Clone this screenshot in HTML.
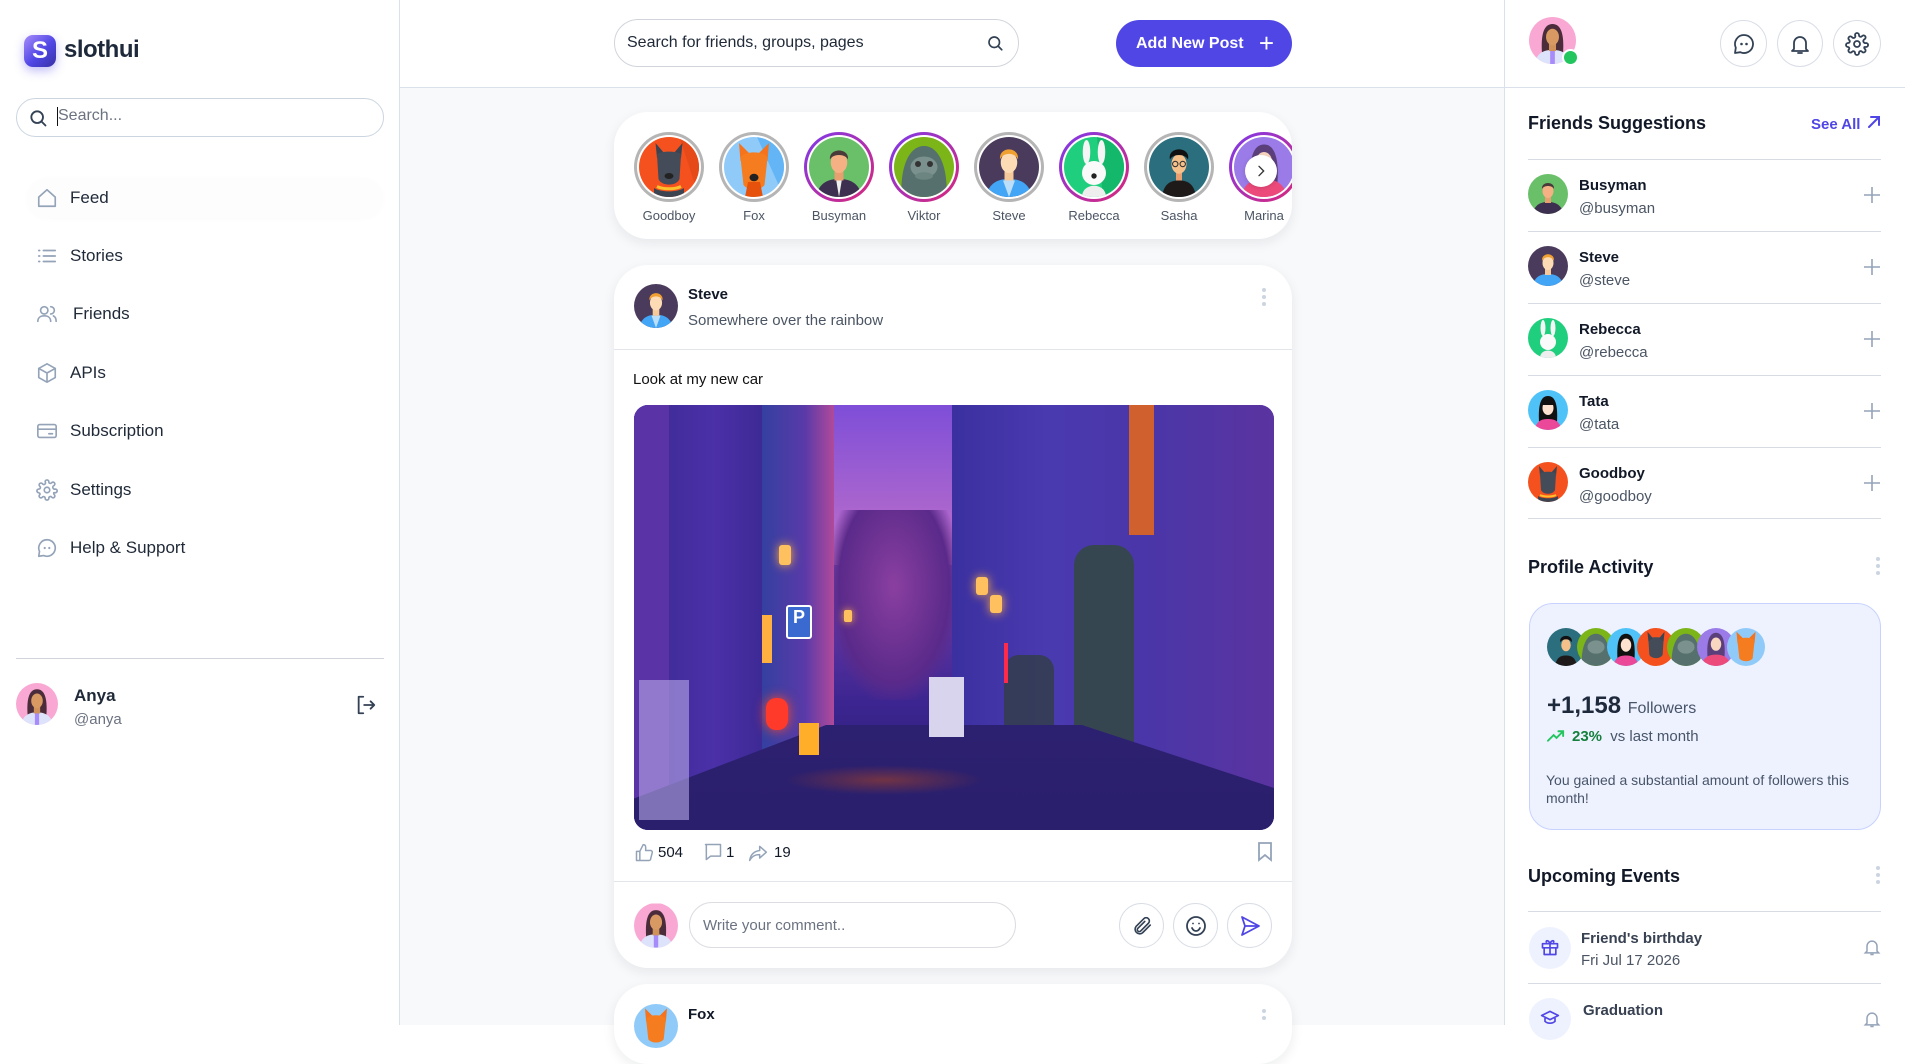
<!DOCTYPE html>
<html><head><meta charset="utf-8"><style>
*{box-sizing:border-box;margin:0;padding:0}
body{width:1905px;height:1025px;overflow:hidden;background:#fff;font-family:"Liberation Sans",sans-serif;color:#111827;position:relative}
.abs{position:absolute}
.av{position:absolute;border-radius:50%;overflow:hidden}
.av svg{display:block;width:100%;height:100%}
.nav{position:absolute;left:36px;display:flex;align-items:center;font-size:17px;color:#1f2937}
.nav svg{width:22px;height:22px;margin-right:12px;fill:none;stroke:#94a3b8;stroke-width:1.8;stroke-linecap:round;stroke-linejoin:round}
.card{position:absolute;background:#fff;border-radius:34px;box-shadow:0 4px 12px rgba(15,23,42,.08)}
.story{position:absolute;top:132px;width:70px;text-align:center}
.story .ring{width:70px;height:70px;border-radius:50%;padding:3px;background:#b5b5b5}
.story .ring.g{background:linear-gradient(135deg,#7c3aed,#db2777)}
.story .ring .in{width:100%;height:100%;border-radius:50%;background:#fff;padding:2px}
.story .ring .in div{width:100%;height:100%;border-radius:50%;overflow:hidden}
.story span{display:block;font-size:13px;color:#4b5563;margin-top:6px}
.ic{position:absolute;border:1px solid #d9dde5;border-radius:50%;display:flex;align-items:center;justify-content:center;background:#fff}
.ic svg{fill:none;stroke:#334155;stroke-width:1.8;stroke-linecap:round;stroke-linejoin:round}
.fr{position:absolute;left:1528px;width:353px;height:72px;border-top:1px solid #d6dbe4}
.fr b{position:absolute;left:51px;top:17px;font-size:15px}
.fr i{position:absolute;left:51px;top:40px;font-size:15px;font-style:normal;color:#4b5563}
.fr .p{position:absolute;right:0;top:26px;width:18px;height:18px}
</style></head><body>

<!-- LEFT SIDEBAR -->
<div class="abs" style="left:399px;top:0;width:1px;height:1025px;background:#dbe1ea"></div>
<div class="abs" style="left:24px;top:35px;width:32px;height:32px;border-radius:9px;background:linear-gradient(135deg,#a78bfa,#4f46e5 55%,#3730a3);box-shadow:0 4px 10px rgba(79,70,229,.35);color:#fff;font-weight:bold;font-size:24px;text-align:center;line-height:32px">S</div>
<div class="abs" style="left:64px;top:36px;font-size:24px;font-weight:bold;color:#1e293b;letter-spacing:-0.5px">slothui</div>
<div class="abs" style="left:16px;top:98px;width:368px;height:39px;border:1px solid #cbd5e1;border-radius:20px"></div>
<svg class="abs" style="left:28px;top:108px" width="20" height="20" viewBox="0 0 24 24" fill="none" stroke="#334155" stroke-width="2.2" stroke-linecap="round"><circle cx="11" cy="11" r="7"/><path d="M16.5 16.5L21 21"/></svg>
<div class="abs" style="left:57px;top:107px;width:1px;height:19px;background:#111"></div>
<div class="abs" style="left:58px;top:107px;font-size:16px;color:#6b7280">Search...</div>

<div class="abs" style="left:27px;top:178px;width:356px;height:40px;border-radius:20px;background:#fdfdfe;box-shadow:0 1px 6px rgba(0,0,0,.02)"></div>
<div class="nav" style="top:187px"><svg viewBox="0 0 24 24"><path d="M3 11L12 3l9 8v10H3z"/></svg>Feed</div>
<div class="nav" style="top:245px"><svg viewBox="0 0 24 24"><path d="M8 6h13M8 12h13M8 18h13M3 6h1M3 12h1M3 18h1"/></svg>Stories</div>
<div class="nav" style="top:303px"><svg viewBox="0 0 24 24"><circle cx="9" cy="8" r="4"/><path d="M2 20c0-4 3-6 7-6s7 2 7 6M16 4a4 4 0 010 8M19 14c2 1 3 3 3 6"/></svg><span style="margin-left:3px">Friends</span></div>
<div class="nav" style="top:362px"><svg viewBox="0 0 24 24"><path d="M12 2l9 5v10l-9 5-9-5V7z M3 7l9 5 9-5 M12 12v10"/></svg>APIs</div>
<div class="nav" style="top:420px"><svg viewBox="0 0 24 24"><rect x="2" y="5" width="20" height="14" rx="2"/><path d="M2 10h20M14 15h4"/></svg>Subscription</div>
<div class="nav" style="top:479px"><svg viewBox="0 0 24 24"><circle cx="12" cy="12" r="3"/><path d="M19.4 15a1.7 1.7 0 00.3 1.8l.1.1a2 2 0 11-2.8 2.8l-.1-.1a1.7 1.7 0 00-2.9 1.2V21a2 2 0 01-4 0v-.1a1.7 1.7 0 00-2.9-1.2l-.1.1a2 2 0 11-2.8-2.8l.1-.1A1.7 1.7 0 003 15H3a2 2 0 010-4h.1a1.7 1.7 0 001.2-2.9l-.1-.1a2 2 0 112.8-2.8l.1.1A1.7 1.7 0 0010 3.1V3a2 2 0 014 0v.1a1.7 1.7 0 002.9 1.2l.1-.1a2 2 0 112.8 2.8l-.1.1A1.7 1.7 0 0021 11h.1a2 2 0 010 4z"/></svg>Settings</div>
<div class="nav" style="top:537px"><svg viewBox="0 0 24 24"><path d="M12 3a9 9 0 00-8.2 12.7L3 21l5.3-.8A9 9 0 1012 3z"/><path d="M9.5 12h.01M14.5 12h.01" stroke-width="2.4"/></svg>Help &amp; Support</div>

<div class="abs" style="left:16px;top:658px;width:368px;height:1px;background:#d1d5db"></div>
<div class="av" style="left:16px;top:683px;width:42px;height:42px"><svg viewBox="0 0 40 40"><rect width="40" height="40" fill="#f9a8d4"/><path d="M11 30 C10 14 13 6 20 6 C27 6 30 14 29 30Z" fill="#4a2c3a"/><path d="M4 44 C5 31 12 28 20 28 C28 28 35 31 36 44Z" fill="#dde3fb"/><rect x="18" y="28" width="4" height="12" fill="#a78bfa"/><rect x="17" y="22" width="6" height="7" fill="#d1915b"/><ellipse cx="20" cy="17" rx="5.5" ry="7" fill="#d89a62"/></svg></div>
<div class="abs" style="left:74px;top:686px;font-size:17px;font-weight:bold;color:#1f2937">Anya</div>
<div class="abs" style="left:74px;top:711px;font-size:15px;color:#6b7280">@anya</div>
<svg class="abs" style="left:355px;top:694px" width="22" height="22" viewBox="0 0 24 24" fill="none" stroke="#334155" stroke-width="2" stroke-linecap="round" stroke-linejoin="round"><path d="M9 3H4v18h5M10 12h11M17 8l4 4-4 4"/></svg>

<!-- CENTER -->
<div class="abs" style="left:400px;top:87px;width:1104px;height:938px;background:#f8f9fb"></div>
<div class="abs" style="left:400px;top:87px;width:1104px;height:1px;background:#dbe1ea"></div>
<div class="abs" style="left:614px;top:19px;width:405px;height:48px;border:1px solid #d1d5db;border-radius:24px;background:#fff"></div>
<div class="abs" style="left:627px;top:34px;font-size:16px;color:#1f2937">Search for friends, groups, pages</div>
<svg class="abs" style="left:986px;top:34px" width="18" height="18" viewBox="0 0 24 24" fill="none" stroke="#334155" stroke-width="2.2" stroke-linecap="round"><circle cx="11" cy="11" r="7"/><path d="M16.5 16.5L21 21"/></svg>
<div class="abs" style="left:1116px;top:20px;width:176px;height:47px;border-radius:24px;background:#4f46e5;color:#fff;font-weight:bold;font-size:16px;line-height:47px;padding-left:20px">Add New Post<span style="position:absolute;right:18px;top:0;font-weight:normal;font-size:26px">+</span></div>

<!-- stories -->
<div class="card" style="left:614px;top:112px;width:678px;height:127px;overflow:hidden"></div>
<div class="abs" style="left:614px;top:112px;width:678px;height:127px;overflow:hidden;border-radius:34px">
<div class="story" style="left:20px;top:20px"><div class="ring"><div class="in"><div><svg viewBox="0 0 40 40"><rect width="40" height="40" fill="#f4511e"/><path d="M27 0 L40 0 L40 40Z" fill="#e64a19"/><path d="M12 14 L11 4 L17 11Z M28 14 L29 4 L23 11Z" fill="#3d4451"/><path d="M12 12 C12 9 28 9 28 12 L27 28 C25 33 15 33 13 28Z" fill="#444c5a"/><path d="M10 34 C14 37 26 37 30 34 L30 40 L10 40Z" fill="#3d4451"/><path d="M12 33 C16 35 24 35 28 33" stroke="#fbc02d" stroke-width="2" fill="none"/><ellipse cx="20" cy="26" rx="3" ry="2" fill="#222"/></svg></div></div></div><span>Goodboy</span></div>
<div class="story" style="left:105px;top:20px"><div class="ring"><div class="in"><div><svg viewBox="0 0 40 40"><rect width="40" height="40" fill="#90caf9"/><path d="M22 0H40V40Z" fill="#64b5f6"/><path d="M11 16 L10 4 L18 12Z M29 16 L30 4 L22 12Z" fill="#f4731c"/><path d="M11 14 C12 9 28 9 29 14 L27 32 C24 36 16 36 13 32Z" fill="#f57c1f"/><path d="M14 40 L16 30 L24 30 L26 40Z" fill="#e6520c"/><ellipse cx="20" cy="27" rx="3" ry="2.5" fill="#222"/></svg></div></div></div><span>Fox</span></div>
<div class="story" style="left:190px;top:20px"><div class="ring g"><div class="in"><div><svg viewBox="0 0 40 40"><rect width="40" height="40" fill="#6abf69"/><path d="M4 44 C5 31 12 28 20 28 C28 28 35 31 36 44Z" fill="#3d2f4f"/><path d="M18 28 L20 40 L22 28Z" fill="#eee"/><rect x="17" y="22" width="6" height="7" fill="#e8a070"/><ellipse cx="20" cy="17" rx="5.5" ry="7" fill="#f5b183"/><path d="M14 15 C13 7 27 7 26 15 C24 11 16 11 14 15Z" fill="#4a3a3a"/></svg></div></div></div><span>Busyman</span></div>
<div class="story" style="left:275px;top:20px"><div class="ring g"><div class="in"><div><svg viewBox="0 0 40 40"><rect width="40" height="40" fill="#7cb518"/><path d="M5 40 C4 20 10 6 20 6 C30 6 36 20 35 40Z" fill="#56706d"/><ellipse cx="20" cy="20" rx="9" ry="7" fill="#7a918d"/><circle cx="16" cy="18" r="2" fill="#333"/><circle cx="24" cy="18" r="2" fill="#333"/><ellipse cx="20" cy="26" rx="6" ry="2.5" fill="#6d8580"/></svg></div></div></div><span>Viktor</span></div>
<div class="story" style="left:360px;top:20px"><div class="ring"><div class="in"><div><svg viewBox="0 0 40 40"><rect width="40" height="40" fill="#4a3b5c"/><path d="M4 44 C5 31 12 28 20 28 C28 28 35 31 36 44Z" fill="#42a5f5"/><path d="M16 29 L20 40 L24 29Z" fill="#bbdefb"/><rect x="17" y="22" width="6" height="7" fill="#f6c99a"/><ellipse cx="20" cy="17" rx="5.5" ry="7" fill="#fddcb5"/><path d="M14 15 C13 6 27 6 26 15 C24 10 16 10 14 15Z" fill="#f0a030"/></svg></div></div></div><span>Steve</span></div>
<div class="story" style="left:445px;top:20px"><div class="ring g"><div class="in"><div><svg viewBox="0 0 40 40"><rect width="40" height="40" fill="#1fcf7d"/><path d="M22 0H40V40H26Z" fill="#14b86a"/><ellipse cx="15" cy="10" rx="2.5" ry="8" fill="#f5f5f5"/><ellipse cx="25" cy="10" rx="2.5" ry="8" fill="#f5f5f5"/><ellipse cx="20" cy="24" rx="8" ry="8" fill="#fafafa"/><path d="M12 40 C12 30 28 30 28 40Z" fill="#eee"/><circle cx="20" cy="26" r="1.8" fill="#222"/></svg></div></div></div><span>Rebecca</span></div>
<div class="story" style="left:530px;top:20px"><div class="ring"><div class="in"><div><svg viewBox="0 0 40 40"><rect width="40" height="40" fill="#2b6e7e"/><path d="M8 44 C9 32 13 29 20 29 C27 29 31 32 32 44Z" fill="#1f1a1a"/><rect x="18" y="23" width="4" height="6" fill="#e8a070"/><ellipse cx="20" cy="18" rx="5" ry="6.5" fill="#f5c08a"/><path d="M14 15 C12 6 28 6 26 15 C24 11 16 11 14 15Z" fill="#111"/><circle cx="17.5" cy="18" r="1.8" fill="none" stroke="#333" stroke-width=".7"/><circle cx="22.5" cy="18" r="1.8" fill="none" stroke="#333" stroke-width=".7"/></svg></div></div></div><span>Sasha</span></div>
<div class="story" style="left:615px;top:20px"><div class="ring g"><div class="in"><div><svg viewBox="0 0 40 40"><rect width="40" height="40" fill="#9a7be8"/><path d="M11 30 C10 14 13 5 20 5 C27 5 30 14 29 30Z" fill="#5b3f7a"/><path d="M4 44 C5 31 12 28 20 28 C28 28 35 31 36 44Z" fill="#ec4a7a"/><ellipse cx="20" cy="17" rx="5.5" ry="7" fill="#f8d6c0"/></svg></div></div></div><span>Marina</span></div>
</div>
<div class="abs" style="left:1245px;top:155px;width:32px;height:32px;border-radius:50%;background:#fff;box-shadow:0 1px 4px rgba(0,0,0,.15)"></div>
<svg class="abs" style="left:1253px;top:163px" width="16" height="16" viewBox="0 0 24 24" fill="none" stroke="#333" stroke-width="2" stroke-linecap="round"><path d="M9 5l7 7-7 7"/></svg>

<!-- post -->
<div class="card" style="left:614px;top:265px;width:678px;height:703px"></div>
<div class="av" style="left:634px;top:284px;width:44px;height:44px"><svg viewBox="0 0 40 40"><rect width="40" height="40" fill="#4a3b5c"/><path d="M4 44 C5 31 12 28 20 28 C28 28 35 31 36 44Z" fill="#42a5f5"/><path d="M16 29 L20 40 L24 29Z" fill="#bbdefb"/><rect x="17" y="22" width="6" height="7" fill="#f6c99a"/><ellipse cx="20" cy="17" rx="5.5" ry="7" fill="#fddcb5"/><path d="M14 15 C13 6 27 6 26 15 C24 10 16 10 14 15Z" fill="#f0a030"/></svg></div>
<div class="abs" style="left:688px;top:286px;font-size:15px;font-weight:bold">Steve</div>
<div class="abs" style="left:688px;top:312px;font-size:15px;color:#4b5563">Somewhere over the rainbow</div>
<div class="abs" style="left:1262px;top:288px;width:4px">
<div style="width:4px;height:4px;border-radius:2px;background:#cbd5e1;margin-bottom:3px"></div><div style="width:4px;height:4px;border-radius:2px;background:#cbd5e1;margin-bottom:3px"></div><div style="width:4px;height:4px;border-radius:2px;background:#cbd5e1"></div></div>
<div class="abs" style="left:614px;top:349px;width:678px;height:1px;background:#e2e5ea"></div>
<div class="abs" style="left:633px;top:371px;font-size:15px;color:#111">Look at my new car</div>

<!-- image -->
<div class="abs" style="left:634px;top:405px;width:640px;height:425px;border-radius:14px;overflow:hidden;background:linear-gradient(180deg,#7a4fcf 0%,#9a5fd0 25%,#6a3aa8 45%,#3c2590 70%,#241a6e 100%)">
  <div class="abs" style="left:200px;top:0;width:120px;height:160px;background:linear-gradient(180deg,#7e4ed8,#a060d0 50%,#c070c8)"></div>
  <div class="abs" style="left:195px;top:105px;width:130px;height:190px;background:radial-gradient(ellipse at 50% 40%,#8a3fa0,#5a2a8a 60%,transparent 75%)"></div>
  <div class="abs" style="left:0;top:0;width:200px;height:425px;background:linear-gradient(90deg,#3a2a90,#4b30a8 40%,#3a2890 70%,#5a2f9a)"></div>
  <div class="abs" style="left:128px;top:0;width:72px;height:420px;background:linear-gradient(90deg,#3440a0,#5a3aa8 60%,#b04a9a)"></div>
  <div class="abs" style="left:0;top:0;width:35px;height:425px;background:#5a34a6"></div>
  <div class="abs" style="left:318px;top:0;width:322px;height:425px;background:linear-gradient(90deg,#3b30a0,#4a3ab0 30%,#4a36a8 60%,#5a34a0)"></div>
  <div class="abs" style="left:495px;top:0;width:25px;height:130px;background:#d0602e"></div>
  <div class="abs" style="left:440px;top:140px;width:60px;height:230px;background:#2f4a3a;border-radius:20px;opacity:.8"></div>
  <div class="abs" style="left:370px;top:250px;width:50px;height:120px;background:#2d3f38;border-radius:15px;opacity:.7"></div>
  <div class="abs" style="left:0;top:320px;width:640px;height:105px;background:linear-gradient(180deg,#2c2070,#2a1f6c);clip-path:polygon(30% 0,70% 0,100% 60%,100% 100%,0 100%,0 70%)"></div>
  <div class="abs" style="left:150px;top:360px;width:200px;height:30px;background:radial-gradient(ellipse,#a0402a,transparent 70%);opacity:.6"></div>
  <div class="abs" style="left:152px;top:200px;width:26px;height:34px;background:#3a6ad0;border:2px solid #fff;border-radius:3px;color:#fff;font-weight:bold;font-size:18px;text-align:center">P</div>
  <div class="abs" style="left:132px;top:293px;width:22px;height:32px;background:#ff3a2a;border-radius:10px;box-shadow:0 0 12px #ff4a2a"></div>
  <div class="abs" style="left:165px;top:318px;width:20px;height:32px;background:#ffae2a"></div>
  <div class="abs" style="left:128px;top:210px;width:10px;height:48px;background:#ffb040"></div>
  <div class="abs" style="left:5px;top:275px;width:50px;height:140px;background:#b8a8e8;opacity:.6"></div>
  <div class="abs" style="left:295px;top:272px;width:35px;height:60px;background:#d8d4ee"></div>
  <div class="abs" style="left:145px;top:140px;width:12px;height:20px;background:#ffc060;border-radius:3px;box-shadow:0 0 10px #ffb040"></div>
  <div class="abs" style="left:342px;top:172px;width:12px;height:18px;background:#ffc060;border-radius:3px;box-shadow:0 0 10px #ffb040"></div>
  <div class="abs" style="left:356px;top:190px;width:12px;height:18px;background:#ffc060;border-radius:3px;box-shadow:0 0 10px #ffb040"></div>
  <div class="abs" style="left:210px;top:205px;width:8px;height:12px;background:#ffc060;border-radius:2px;box-shadow:0 0 8px #ffb040"></div>
  <div class="abs" style="left:370px;top:238px;width:4px;height:40px;background:#ff2a4a"></div>
</div>

<!-- stats -->
<svg class="abs" style="left:634px;top:843px" width="20" height="20" viewBox="0 0 24 24" fill="none" stroke="#94a3b8" stroke-width="1.8" stroke-linejoin="round"><path d="M7 10v11H3V10zM7 10l4-8c2 0 3 1 3 3v4h6c1 0 2 1 2 2l-2 8c0 1-1 2-2 2H7"/></svg>
<div class="abs" style="left:658px;top:844px;font-size:15px">504</div>
<svg class="abs" style="left:703px;top:842px" width="20" height="20" viewBox="0 0 24 24" fill="none" stroke="#94a3b8" stroke-width="1.8" stroke-linejoin="round"><path d="M3 3h18v14H9l-5 4V3z"/><path d="M10 10h.01M14 10h.01"/></svg>
<div class="abs" style="left:726px;top:844px;font-size:15px">1</div>
<svg class="abs" style="left:748px;top:843px" width="20" height="20" viewBox="0 0 24 24" fill="none" stroke="#94a3b8" stroke-width="1.8" stroke-linejoin="round"><path d="M14 4l8 7-8 7v-4C8 14 5 16 2 21c1-7 5-11 12-12z"/></svg>
<div class="abs" style="left:774px;top:844px;font-size:15px">19</div>
<svg class="abs" style="left:1257px;top:842px" width="16" height="20" viewBox="0 0 16 20" fill="none" stroke="#94a3b8" stroke-width="1.8"><path d="M2 1h12v17l-6-5-6 5z"/></svg>
<div class="abs" style="left:614px;top:881px;width:678px;height:1px;background:#e2e5ea"></div>
<div class="av" style="left:634px;top:903px;width:44px;height:45px"><svg viewBox="0 0 40 40"><rect width="40" height="40" fill="#f9a8d4"/><path d="M11 30 C10 14 13 6 20 6 C27 6 30 14 29 30Z" fill="#4a2c3a"/><path d="M4 44 C5 31 12 28 20 28 C28 28 35 31 36 44Z" fill="#dde3fb"/><rect x="18" y="28" width="4" height="12" fill="#a78bfa"/><rect x="17" y="22" width="6" height="7" fill="#d1915b"/><ellipse cx="20" cy="17" rx="5.5" ry="7" fill="#d89a62"/></svg></div>
<div class="abs" style="left:689px;top:902px;width:327px;height:46px;border:1px solid #dcdde2;border-radius:23px"></div>
<div class="abs" style="left:703px;top:917px;font-size:15px;color:#6b7280">Write your comment..</div>
<div class="ic" style="left:1119px;top:903px;width:45px;height:45px"><svg width="22" height="22" viewBox="0 0 24 24"><path d="M21 11l-8.5 8.5a5 5 0 01-7-7L14 4a3.5 3.5 0 015 5l-8.5 8.5a2 2 0 01-3-3L15 7"/></svg></div>
<div class="ic" style="left:1173px;top:903px;width:45px;height:45px"><svg width="24" height="24" viewBox="0 0 24 24"><circle cx="12" cy="12" r="9"/><path d="M8 14c1 2 2.5 3 4 3s3-1 4-3M9 9.5h.01M15 9.5h.01"/></svg></div>
<div class="ic" style="left:1227px;top:903px;width:45px;height:45px"><svg width="24" height="24" viewBox="0 0 24 24" style="stroke:#4f46e5"><path d="M4 3l17 9-17 9 3-9zM7 12h14"/></svg></div>

<!-- next post -->
<div class="card" style="left:614px;top:984px;width:678px;height:80px"></div>
<div class="av" style="left:634px;top:1004px;width:44px;height:44px"><svg viewBox="0 0 40 40"><rect width="40" height="40" fill="#90caf9"/><path d="M11 16 L10 4 L18 12Z M29 16 L30 4 L22 12Z" fill="#f4731c"/><path d="M11 14 C12 9 28 9 29 14 L27 32 C24 36 16 36 13 32Z" fill="#f57c1f"/></svg></div>
<div class="abs" style="left:688px;top:1006px;font-size:15px;font-weight:bold">Fox</div>
<div class="abs" style="left:1262px;top:1009px"><div style="width:4px;height:4px;border-radius:2px;background:#cbd5e1;margin-bottom:3px"></div><div style="width:4px;height:4px;border-radius:2px;background:#cbd5e1"></div></div>

<!-- RIGHT PANEL -->
<div class="abs" style="left:1504px;top:0;width:1px;height:1025px;background:#dbe1ea"></div>
<div class="abs" style="left:1505px;top:87px;width:400px;height:1px;background:#dbe1ea"></div>
<div class="av" style="left:1529px;top:17px;width:47px;height:47px"><svg viewBox="0 0 40 40"><rect width="40" height="40" fill="#f9a8d4"/><path d="M11 30 C10 14 13 6 20 6 C27 6 30 14 29 30Z" fill="#4a2c3a"/><path d="M4 44 C5 31 12 28 20 28 C28 28 35 31 36 44Z" fill="#dde3fb"/><rect x="18" y="28" width="4" height="12" fill="#a78bfa"/><rect x="17" y="22" width="6" height="7" fill="#d1915b"/><ellipse cx="20" cy="17" rx="5.5" ry="7" fill="#d89a62"/></svg></div>
<div class="abs" style="left:1562px;top:49px;width:17px;height:17px;border-radius:50%;background:#22c55e;border:2px solid #fff"></div>
<div class="ic" style="left:1720px;top:20px;width:47px;height:47px"><svg width="24" height="24" viewBox="0 0 24 24"><path d="M12 3a9 9 0 00-8.2 12.7L3 21l5.3-.8A9 9 0 1012 3z"/><path d="M9.5 12h.01M14.5 12h.01" stroke-width="2.6"/></svg></div>
<div class="ic" style="left:1777px;top:20px;width:46px;height:47px"><svg width="24" height="24" viewBox="0 0 24 24"><path d="M6 17V11a6 6 0 0112 0v6l2 2H4zM10 21h4"/></svg></div>
<div class="ic" style="left:1833px;top:20px;width:48px;height:47px"><svg width="24" height="24" viewBox="0 0 24 24"><circle cx="12" cy="12" r="3"/><path d="M19.4 15a1.7 1.7 0 00.3 1.8l.1.1a2 2 0 11-2.8 2.8l-.1-.1a1.7 1.7 0 00-2.9 1.2V21a2 2 0 01-4 0v-.1a1.7 1.7 0 00-2.9-1.2l-.1.1a2 2 0 11-2.8-2.8l.1-.1A1.7 1.7 0 003 15H3a2 2 0 010-4h.1a1.7 1.7 0 001.2-2.9l-.1-.1a2 2 0 112.8-2.8l.1.1A1.7 1.7 0 0010 3.1V3a2 2 0 014 0v.1a1.7 1.7 0 002.9 1.2l.1-.1a2 2 0 112.8 2.8l-.1.1A1.7 1.7 0 0021 11h.1a2 2 0 010 4z"/></svg></div>

<div class="abs" style="left:1528px;top:113px;font-size:18px;font-weight:bold">Friends Suggestions</div>
<div class="abs" style="left:1811px;top:116px;font-size:15px;font-weight:bold;color:#4f46e5">See All</div>
<svg class="abs" style="left:1866px;top:114px" width="16" height="16" viewBox="0 0 16 16" fill="none" stroke="#4f46e5" stroke-width="2" stroke-linecap="round"><path d="M3 13L13 3M5 3h8v8"/></svg>

<div class="fr" style="top:159px"><div class="av" style="left:0;top:14px;width:40px;height:40px"><svg viewBox="0 0 40 40"><rect width="40" height="40" fill="#6abf69"/><path d="M4 44 C5 31 12 28 20 28 C28 28 35 31 36 44Z" fill="#3d2f4f"/><rect x="17" y="22" width="6" height="7" fill="#e8a070"/><ellipse cx="20" cy="17" rx="5.5" ry="7" fill="#f5b183"/><path d="M14 15 C13 7 27 7 26 15 C24 11 16 11 14 15Z" fill="#4a3a3a"/></svg></div><b>Busyman</b><i>@busyman</i><svg class="p" viewBox="0 0 18 18" stroke="#94a3b8" stroke-width="1.6"><path d="M9 1v16M1 9h16"/></svg></div>
<div class="fr" style="top:231px"><div class="av" style="left:0;top:14px;width:40px;height:40px"><svg viewBox="0 0 40 40"><rect width="40" height="40" fill="#4a3b5c"/><path d="M4 44 C5 31 12 28 20 28 C28 28 35 31 36 44Z" fill="#42a5f5"/><rect x="17" y="22" width="6" height="7" fill="#f6c99a"/><ellipse cx="20" cy="17" rx="5.5" ry="7" fill="#fddcb5"/><path d="M14 15 C13 6 27 6 26 15 C24 10 16 10 14 15Z" fill="#f0a030"/></svg></div><b>Steve</b><i>@steve</i><svg class="p" viewBox="0 0 18 18" stroke="#94a3b8" stroke-width="1.6"><path d="M9 1v16M1 9h16"/></svg></div>
<div class="fr" style="top:303px"><div class="av" style="left:0;top:14px;width:40px;height:40px"><svg viewBox="0 0 40 40"><rect width="40" height="40" fill="#1fcf7d"/><ellipse cx="15" cy="10" rx="2.5" ry="8" fill="#f5f5f5"/><ellipse cx="25" cy="10" rx="2.5" ry="8" fill="#f5f5f5"/><ellipse cx="20" cy="24" rx="8" ry="8" fill="#fafafa"/><path d="M12 40 C12 30 28 30 28 40Z" fill="#eee"/></svg></div><b>Rebecca</b><i>@rebecca</i><svg class="p" viewBox="0 0 18 18" stroke="#94a3b8" stroke-width="1.6"><path d="M9 1v16M1 9h16"/></svg></div>
<div class="fr" style="top:375px"><div class="av" style="left:0;top:14px;width:40px;height:40px"><svg viewBox="0 0 40 40"><rect width="40" height="40" fill="#4fc3f7"/><path d="M11 32 C10 14 13 6 20 6 C27 6 30 14 29 32Z" fill="#111"/><path d="M6 44 C7 32 12 29 20 29 C28 29 33 32 34 44Z" fill="#ec4899"/><ellipse cx="20" cy="18" rx="5.5" ry="7" fill="#fde2d0"/><path d="M14 15 C14 9 26 9 26 15Z" fill="#111"/></svg></div><b>Tata</b><i>@tata</i><svg class="p" viewBox="0 0 18 18" stroke="#94a3b8" stroke-width="1.6"><path d="M9 1v16M1 9h16"/></svg></div>
<div class="fr" style="top:447px;border-bottom:1px solid #d6dbe4"><div class="av" style="left:0;top:14px;width:40px;height:40px"><svg viewBox="0 0 40 40"><rect width="40" height="40" fill="#f4511e"/><path d="M12 14 L11 4 L17 11Z M28 14 L29 4 L23 11Z" fill="#3d4451"/><path d="M12 12 C12 9 28 9 28 12 L27 28 C25 33 15 33 13 28Z" fill="#444c5a"/><path d="M10 34 C14 37 26 37 30 34 L30 40 L10 40Z" fill="#3d4451"/><path d="M12 33 C16 35 24 35 28 33" stroke="#fbc02d" stroke-width="2" fill="none"/></svg></div><b>Goodboy</b><i>@goodboy</i><svg class="p" viewBox="0 0 18 18" stroke="#94a3b8" stroke-width="1.6"><path d="M9 1v16M1 9h16"/></svg></div>

<div class="abs" style="left:1528px;top:557px;font-size:18px;font-weight:bold">Profile Activity</div>
<div class="abs" style="left:1876px;top:557px"><div style="width:4px;height:4px;border-radius:2px;background:#cbd5e1;margin-bottom:3px"></div><div style="width:4px;height:4px;border-radius:2px;background:#cbd5e1;margin-bottom:3px"></div><div style="width:4px;height:4px;border-radius:2px;background:#cbd5e1"></div></div>
<div class="abs" style="left:1529px;top:603px;width:352px;height:227px;border:1px solid #c7d2fe;border-radius:24px;background:#eef2ff"></div>
<div class="av" style="left:1547px;top:628px;width:38px;height:38px"><svg viewBox="0 0 40 40"><rect width="40" height="40" fill="#2b6e7e"/><path d="M8 44 C9 32 13 29 20 29 C27 29 31 32 32 44Z" fill="#1f1a1a"/><ellipse cx="20" cy="18" rx="5" ry="6.5" fill="#f5c08a"/><path d="M14 15 C12 6 28 6 26 15 C24 11 16 11 14 15Z" fill="#111"/></svg></div>
<div class="av" style="left:1577px;top:628px;width:38px;height:38px"><svg viewBox="0 0 40 40"><rect width="40" height="40" fill="#7cb518"/><path d="M5 40 C4 20 10 6 20 6 C30 6 36 20 35 40Z" fill="#56706d"/><ellipse cx="20" cy="20" rx="9" ry="7" fill="#7a918d"/></svg></div>
<div class="av" style="left:1607px;top:628px;width:38px;height:38px"><svg viewBox="0 0 40 40"><rect width="40" height="40" fill="#4fc3f7"/><path d="M11 32 C10 14 13 6 20 6 C27 6 30 14 29 32Z" fill="#111"/><path d="M6 44 C7 32 12 29 20 29 C28 29 33 32 34 44Z" fill="#ec4899"/><ellipse cx="20" cy="18" rx="5.5" ry="7" fill="#fde2d0"/></svg></div>
<div class="av" style="left:1637px;top:628px;width:38px;height:38px"><svg viewBox="0 0 40 40"><rect width="40" height="40" fill="#f4511e"/><path d="M12 12 C12 9 28 9 28 12 L27 28 C25 33 15 33 13 28Z" fill="#444c5a"/><path d="M12 14 L11 4 L17 11Z M28 14 L29 4 L23 11Z" fill="#3d4451"/></svg></div>
<div class="av" style="left:1667px;top:628px;width:38px;height:38px"><svg viewBox="0 0 40 40"><rect width="40" height="40" fill="#7cb518"/><path d="M5 40 C4 20 10 6 20 6 C30 6 36 20 35 40Z" fill="#56706d"/><ellipse cx="20" cy="20" rx="9" ry="7" fill="#7a918d"/></svg></div>
<div class="av" style="left:1697px;top:628px;width:38px;height:38px"><svg viewBox="0 0 40 40"><rect width="40" height="40" fill="#9a7be8"/><path d="M11 30 C10 14 13 5 20 5 C27 5 30 14 29 30Z" fill="#5b3f7a"/><path d="M4 44 C5 31 12 28 20 28 C28 28 35 31 36 44Z" fill="#ec4a7a"/><ellipse cx="20" cy="17" rx="5.5" ry="7" fill="#f8d6c0"/></svg></div>
<div class="av" style="left:1727px;top:628px;width:38px;height:38px"><svg viewBox="0 0 40 40"><rect width="40" height="40" fill="#90caf9"/><path d="M11 16 L10 4 L18 12Z M29 16 L30 4 L22 12Z" fill="#f4731c"/><path d="M11 14 C12 9 28 9 29 14 L27 32 C24 36 16 36 13 32Z" fill="#f57c1f"/></svg></div>
<div class="abs" style="left:1547px;top:692px;font-size:24px;font-weight:bold;color:#1e293b">+1,158 <span style="font-size:16px;font-weight:normal;color:#475569">Followers</span></div>
<svg class="abs" style="left:1547px;top:729px" width="19" height="14" viewBox="0 0 20 14" fill="none" stroke="#22c55e" stroke-width="2" stroke-linecap="round"><path d="M1 12l6-6 3 3 7-7M12 2h5v5"/></svg>
<div class="abs" style="left:1572px;top:728px;font-size:15px"><b style="color:#15803d">23%</b> <span style="color:#475569;margin-left:4px">vs last month</span></div>
<div class="abs" style="left:1546px;top:771px;width:310px;font-size:14px;line-height:18px;color:#475569">You gained a substantial amount of followers this month!</div>

<div class="abs" style="left:1528px;top:866px;font-size:18px;font-weight:bold">Upcoming Events</div>
<div class="abs" style="left:1876px;top:866px"><div style="width:4px;height:4px;border-radius:2px;background:#cbd5e1;margin-bottom:3px"></div><div style="width:4px;height:4px;border-radius:2px;background:#cbd5e1;margin-bottom:3px"></div><div style="width:4px;height:4px;border-radius:2px;background:#cbd5e1"></div></div>
<div class="abs" style="left:1528px;top:911px;width:353px;height:1px;background:#d6dbe4"></div>
<div class="abs" style="left:1529px;top:927px;width:42px;height:42px;border-radius:50%;background:#eef2ff"></div>
<svg class="abs" style="left:1540px;top:937px" width="20" height="20" viewBox="0 0 24 24" fill="none" stroke="#4f46e5" stroke-width="2" stroke-linejoin="round"><rect x="3" y="8" width="18" height="5"/><path d="M5 13v8h14v-8M12 8v13M12 8C10 3 6 4 8 7M12 8c2-5 6-4 4-1"/></svg>
<div class="abs" style="left:1581px;top:930px;font-size:15px;font-weight:bold;color:#374151">Friend's birthday</div>
<div class="abs" style="left:1581px;top:952px;font-size:15px;color:#4b5563">Fri Jul 17 2026</div>
<svg class="abs" style="left:1862px;top:936px" width="20" height="22" viewBox="0 0 24 24" fill="none" stroke="#94a3b8" stroke-width="1.8"><path d="M6 17V11a6 6 0 0112 0v6l2 2H4zM10 21h4"/></svg>
<div class="abs" style="left:1528px;top:983px;width:353px;height:1px;background:#d6dbe4"></div>
<div class="abs" style="left:1529px;top:998px;width:42px;height:42px;border-radius:50%;background:#eef2ff"></div>
<svg class="abs" style="left:1540px;top:1008px" width="20" height="20" viewBox="0 0 24 24" fill="none" stroke="#4f46e5" stroke-width="2" stroke-linejoin="round"><path d="M2 9l10-5 10 5-10 5zM6 11v5c3 3 9 3 12 0v-5"/></svg>
<div class="abs" style="left:1583px;top:1002px;font-size:15px;font-weight:bold;color:#374151">Graduation</div>
<svg class="abs" style="left:1862px;top:1008px" width="20" height="22" viewBox="0 0 24 24" fill="none" stroke="#94a3b8" stroke-width="1.8"><path d="M6 17V11a6 6 0 0112 0v6l2 2H4zM10 21h4"/></svg>

</body></html>
